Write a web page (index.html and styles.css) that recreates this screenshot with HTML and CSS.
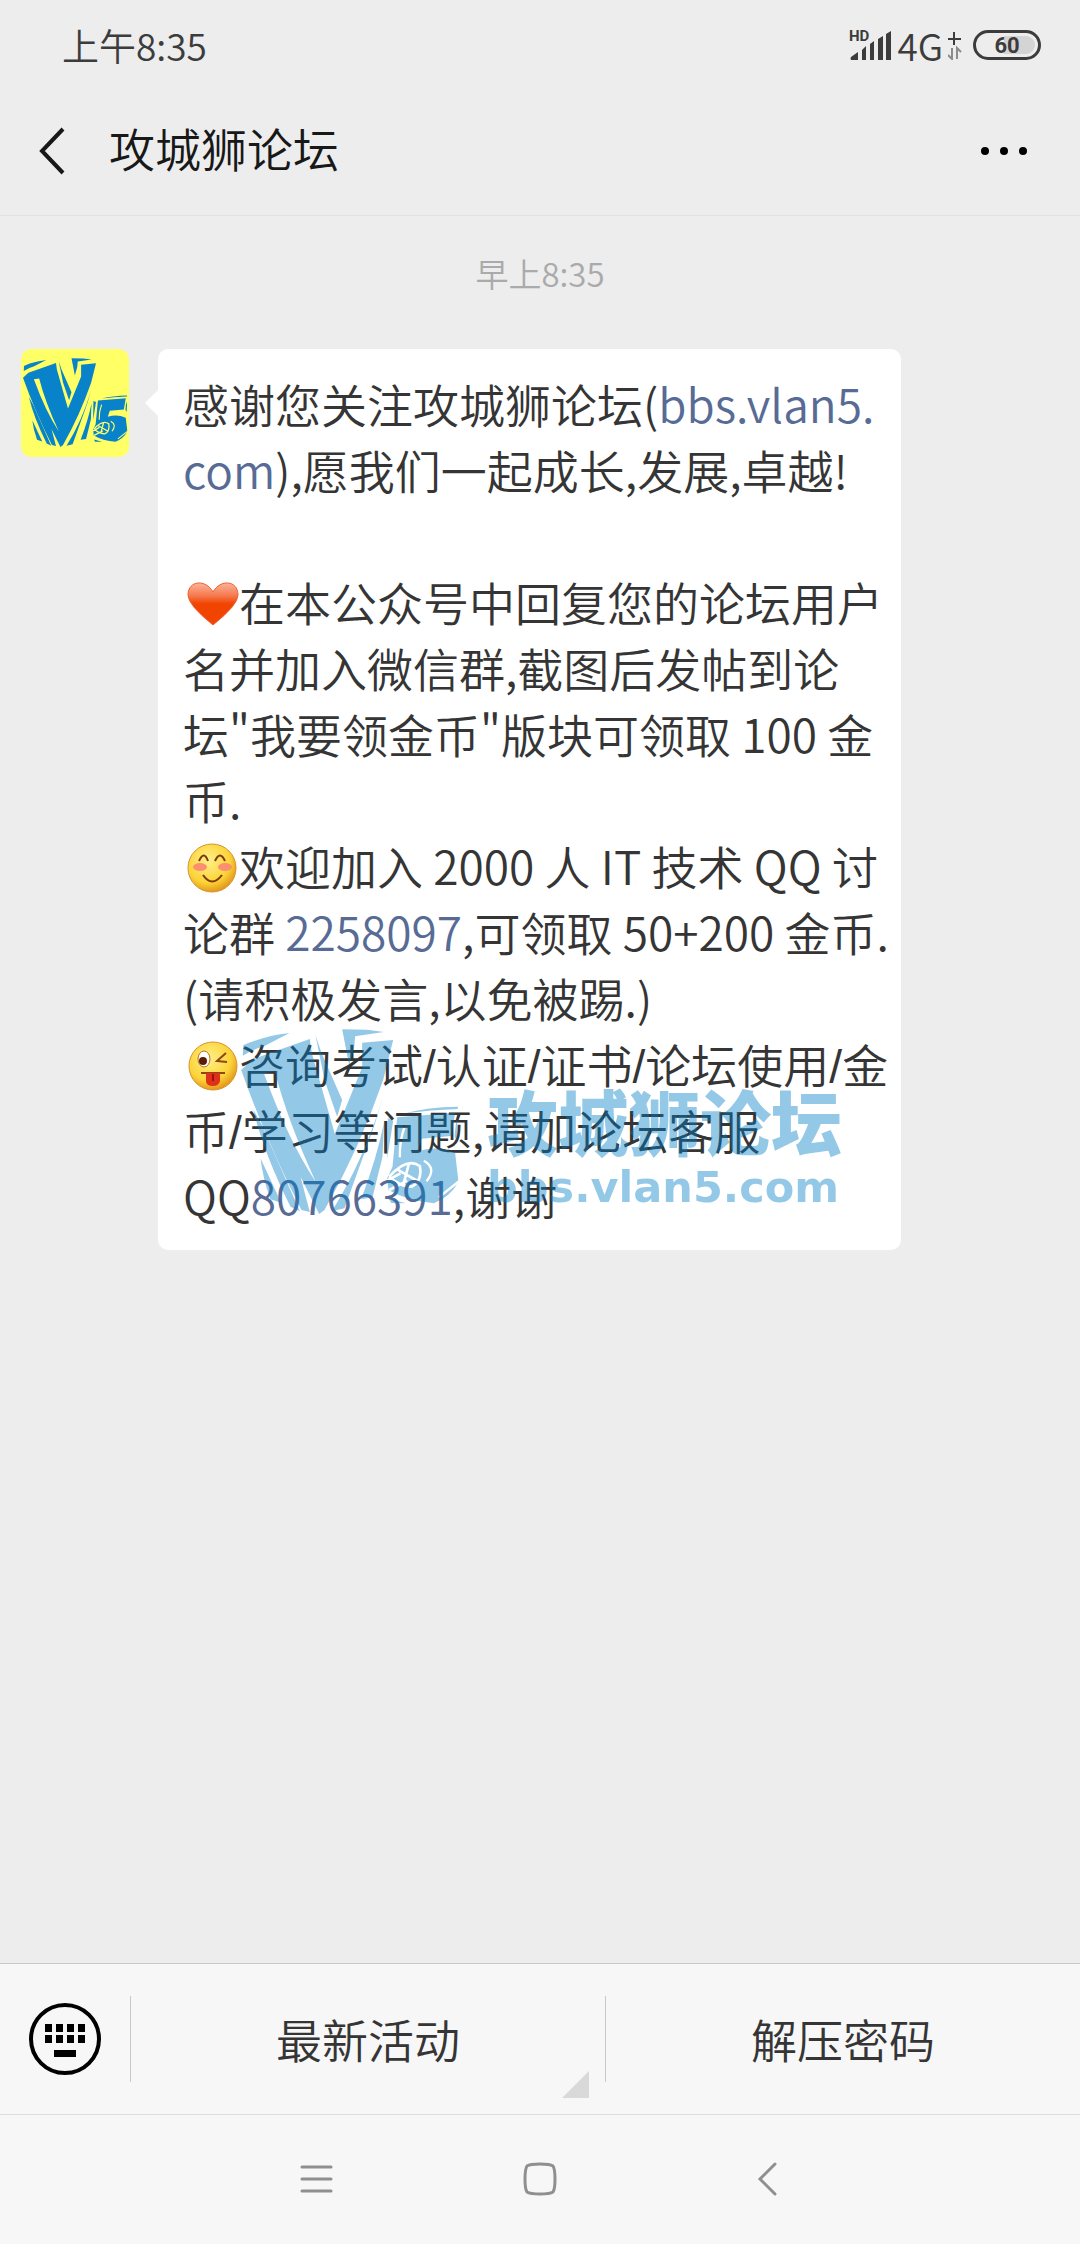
FILE: index.html
```html
<!DOCTYPE html>
<html lang="zh-CN">
<head>
    <meta charset="UTF-8">
    <meta name="viewport" content="width=device-width, initial-scale=1.0">
    <title>攻城狮论坛</title>
    <link rel="stylesheet" href="styles.css">
</head>
<body>
    <!-- V5 logo, shared by the avatar and the watermark -->
    <svg class="defs" width="0" height="0" aria-hidden="true">
        <defs>
            <mask id="cuts" maskUnits="userSpaceOnUse" x="0" y="0" width="800" height="700">
                <rect width="800" height="700" fill="#fff"/>
                <path d="M130 190L163 184Q200 330 286 516Q205 395 130 190Z" fill="#000"/>
                <path d="M553 348Q537 390 538 442" fill="none" stroke="#000" stroke-width="7"/>
                <path d="M506 500Q560 440 598 468Q606 512 574 530Q540 530 506 500M530 478L596 516M566 458L548 526M500 512L540 490M506 540L560 512" fill="none" stroke="#000" stroke-width="8"/>
                <path d="M610 452Q650 474 618 514M655 562L720 510M672 570L720 544" fill="none" stroke="#000" stroke-width="7"/>
            </mask>
        </defs>
        <symbol id="v5" viewBox="62 57 656 555">
            <g mask="url(#cuts)">
                <path d="M67 137L68 106Q130 78 207 69L132 108Q92 120 67 137Z"/>
                <path d="M62 180L96 148L268 87L274 130L343 372L372 302L425 172L425 98L518 90L488 210Q415 420 312 600L296 612L240 500L268 606L243 600Q140 400 62 180Z"/>
                <path d="M285 76L302 126L365 270L350 320L312 210Z"/>
                <path d="M365 58L440 59L490 66L404 79L401 112L386 166Z"/>
                <path d="M98 298L124 345L238 604L210 590Q130 430 98 298Z"/>
                <path d="M120 445L182 578L150 568Q128 510 120 445Z"/>
                <path d="M487 262L462 345L372 595L334 604Q430 450 487 262Z"/>
                <path d="M490 340L486 440L456 562L422 568Q470 440 490 340Z"/>
                <path d="M502 325L518 332L500 446Z"/>
                <path d="M555 310Q620 291 713 290L711 297Q630 300 555 310Z"/>
                <path d="M530 322L704 308L692 378L604 386L592 424Q650 404 704 430L714 516Q690 560 640 580Q560 572 504 540L500 505L516 470Z"/>
                <path d="M708 326L712 350L709 396L702 378Z"/>
                <path d="M506 566L556 580L512 579Z"/>
            </g>
        </symbol>
        <radialGradient id="face" cx="0.42" cy="0.35" r="0.65">
            <stop offset="0" stop-color="#fff08a"/>
            <stop offset="0.7" stop-color="#fcd338"/>
            <stop offset="1" stop-color="#e39a1c"/>
        </radialGradient>
        <linearGradient id="heart" x1="0" y1="0" x2="0" y2="1">
            <stop offset="0" stop-color="#fbb49a"/>
            <stop offset="0.3" stop-color="#f67a50"/>
            <stop offset="0.5" stop-color="#f04400"/>
            <stop offset="1" stop-color="#f04400"/>
        </linearGradient>
    </svg>

    <div class="status">
        <span class="clock">上午8:35</span>
        <div class="indicators">
            <svg width="44" height="38" viewBox="0 -2 44 38" fill="#3c3c3c">
                <text class="hd" x="1" y="13">HD</text>
                <path d="M3 29L10 24V32H3Q2 30 3 29ZM14 22L18 18V32H14ZM22 16L26 13V32H22ZM30 11L35 8V32H30ZM38 6L43 3V32H38Z"/>
            </svg>
            <span class="network">4G</span>
            <svg width="14" height="30" viewBox="0 0 14 30">
                <path d="M0 9H13M6 2V15" stroke="#3c3c3c" stroke-width="2"/>
                <path d="M4 18V29L0 25M9 29V18L13 22" fill="none" stroke="#8c8c8c" stroke-width="2"/>
            </svg>
            <span class="battery">60</span>
        </div>
    </div>

    <header class="header">
        <button class="icon-button" aria-label="返回">
            <svg width="28" height="50" viewBox="0 0 28 50"><path d="M25 3L4 25L25 47" fill="none" stroke="#181818" stroke-width="4"/></svg>
        </button>
        <h1>攻城狮论坛</h1>
        <button class="icon-button" aria-label="更多">
            <svg width="48" height="10" viewBox="0 0 48 10"><circle cx="5" cy="5" r="4"/><circle cx="24" cy="5" r="4"/><circle cx="43" cy="5" r="4"/></svg>
        </button>
    </header>

    <main class="chat">
        <p class="time">早上8:35</p>
        <div class="message">
            <div class="avatar"><svg width="105" height="89"><use href="#v5"/></svg></div>
            <div class="bubble">
                <p>感谢您关注攻城狮论坛(<a href="#">bbs.vlan5.<br>com</a>),愿我们一起成长,发展,卓越!</p>
                <br>
                <p><svg class="emoji" viewBox="0 0 56 50" role="img" aria-label="爱心">
                    <path d="M30 46Q5 26 5 16C5 1 23 0 30 13C37 0 55 1 55 16Q55 26 30 46Z" fill="url(#heart)" stroke="#f06030"/>
                </svg>在本公众号中回复您的论坛用户<br>名并加入微信群,截图后发帖到论<br>坛"我要领金币"版块可领取 100 金<br>币.</p>
                <p><svg class="emoji" viewBox="0 0 56 50" role="img" aria-label="微笑">
                    <circle cx="29" cy="25" r="24" fill="url(#face)" stroke="#d8922a"/>
                    <ellipse cx="17" cy="24" rx="7" ry="4" fill="#fb8f70"/>
                    <ellipse cx="42" cy="24" rx="7" ry="4" fill="#fb8f70"/>
                    <path d="M16 18Q21 7 25 18M32 18Q37 7 42 18M20 32Q29 45 39 32" fill="none" stroke="#7c3808" stroke-width="2"/>
                </svg>欢迎加入 2000 人 IT 技术 QQ 讨<br>论群 <a href="#">2258097</a>,可领取 50+200 金币.<br>(请积极发言,以免被踢.)</p>
                <p><svg class="emoji" viewBox="0 0 56 50" role="img" aria-label="调皮">
                    <circle cx="30" cy="25" r="24" fill="url(#face)" stroke="#d8922a"/>
                    <ellipse cx="21" cy="18" rx="6" ry="8" fill="#fff" stroke="#b87018"/>
                    <circle cx="20" cy="20" r="4" fill="#5a1c08"/>
                    <path d="M43 12L34 20L44 21M18 32H42" fill="none" stroke="#8c4810" stroke-width="2"/>
                    <path d="M23 32H37V40Q36 45 30 45Q23 45 23 40Z" fill="#e0301c"/>
                    <path d="M30 33V40" stroke="#9c1408" stroke-width="2"/>
                </svg>咨询考试<i>/</i>认证<i>/</i>证书<i>/</i>论坛使用<i>/</i>金<br>币<i>/</i>学习等问题,请加论坛客服<br>QQ<a href="#">80766391</a>,谢谢</p>
                <div class="watermark">
                    <svg width="219" height="185"><use href="#v5"/></svg>
                    <div class="watermark-text">
                        <strong>攻城狮论坛</strong>
                        <span>bbs.vlan5.com</span>
                    </div>
                </div>
            </div>
        </div>
    </main>

    <footer>
        <div class="menu">
            <button class="keyboard" aria-label="键盘">
                <svg width="74" height="74" viewBox="0 0 74 74">
                    <circle cx="37" cy="37" r="34" fill="none" stroke="#000" stroke-width="4"/>
                    <path d="M17 22h7v8h-7zM28 22h7v8h-7zM39 22h7v8h-7zM50 22h7v8h-7zM17 33h7v8h-7zM28 33h7v8h-7zM39 33h7v8h-7zM50 33h7v8h-7zM26 48h22v7h-22z"/>
                </svg>
            </button>
            <button class="menu-item has-sub">最新活动</button>
            <button class="menu-item">解压密码</button>
        </div>
        <nav class="navbar">
            <button class="icon-button" aria-label="任务">
                <svg width="34" height="34" viewBox="0 0 34 34"><path d="M3 5H32M3 17H32M3 29H32"/></svg>
            </button>
            <button class="icon-button" aria-label="主页">
                <svg width="34" height="34" viewBox="0 0 34 34"><path d="M17 2Q27 2 30 4Q32 7 32 17Q32 27 30 30Q27 32 17 32Q7 32 4 30Q2 27 2 17Q2 7 4 4Q7 2 17 2Z"/></svg>
            </button>
            <button class="icon-button" aria-label="后退">
                <svg width="34" height="34" viewBox="0 0 34 34"><path d="M28 2L13 17L28 32"/></svg>
            </button>
        </nav>
    </footer>
</body>
</html>
```
FILE: styles.css
```css
* {
    box-sizing: border-box;
}
body {
    margin: 0;
    min-height: 100vh;
    display: flex;
    flex-direction: column;
    background-color: #ededed;
    color: #353535;
    font-family: "Noto Sans CJK SC", sans-serif;
    font-weight: 350;
}
h1, p {
    margin: 0;
    font-weight: inherit;
}
button {
    padding: 0;
    border: none;
    background: none;
    color: inherit;
    font: inherit;
    cursor: pointer;
}
a {
    color: #576b95;
    text-decoration: none;
}
svg {
    display: block;
}
.defs {
    position: absolute;
}

/* status bar */
.status {
    height: 90px;
    padding: 0 39px 0 62px;
    display: flex;
    align-items: center;
    justify-content: space-between;
    color: #3c3c3c;
    font-size: 37px;
}
.indicators {
    display: flex;
    align-items: center;
    gap: 5px;
}
.hd {
    font-family: Roboto, sans-serif;
    font-size: 15px;
    font-weight: 700;
}
.network {
    font-size: 37px;
    line-height: 38px;
}
.battery {
    width: 68px;
    height: 30px;
    margin-left: 6px;
    border: 3px solid #3c3c3c;
    border-radius: 15px;
    background: linear-gradient(to right, #ededed 45%, #d4d4d4 45%) padding-box;
    box-shadow: inset 0 0 0 3px #ededed;
    font-family: Roboto, sans-serif;
    font-size: 22px;
    font-weight: 700;
    line-height: 25px;
    text-align: center;
}

/* title bar */
.header {
    height: 126px;
    padding: 0 52px 4px 38px;
    display: flex;
    align-items: center;
    border-bottom: 1px solid #e2e2e2;
    color: #181818;
}
.header h1 {
    flex: 1;
    margin-left: 43px;
    padding-bottom: 8px;
    font-size: 46px;
    line-height: 66px;
}

/* chat */
.chat {
    flex: 1;
    padding: 33px 21px;
}
.time {
    margin-bottom: 52px;
    color: #aaa;
    font-size: 33px;
    line-height: 48px;
    text-align: center;
}
.message {
    padding-right: 158px;
    display: flex;
    align-items: flex-start;
    gap: 29px;
}
.avatar {
    width: 108px;
    height: 108px;
    padding: 9px 2px;
    border-radius: 10px;
    background-color: #ffff66;
    fill: #0882c8;
}
.bubble {
    position: relative;
    flex: 1;
    padding: 21px 0 22px 25px;
    border-radius: 10px;
    background-color: #fff;
    font-size: 46px;
    line-height: 66px;
    white-space: nowrap;
}
.bubble::before {
    content: "";
    position: absolute;
    left: -13px;
    top: 40px;
    border: 14px solid transparent;
    border-left: none;
    border-right: 14px solid #fff;
}
/* slim slash between the topics */
.bubble i {
    font-family: "Liberation Sans", sans-serif;
    font-style: normal;
    line-height: 1;
}
.emoji {
    display: inline-block;
    width: 56px;
    height: 50px;
    vertical-align: -8px;
}
.watermark {
    position: absolute;
    left: 83px;
    top: 680px;
    display: flex;
    gap: 27px;
    color: #007dc8;
    fill: #007dc8;
    opacity: 0.42;
    pointer-events: none;
}
.watermark-text {
    padding-top: 50px;
    display: flex;
    flex-direction: column;
}
.watermark strong {
    font-size: 71px;
    font-weight: 900;
    line-height: 80px;
}
.watermark span {
    font-family: "DejaVu Sans", sans-serif;
    font-size: 43px;
    font-weight: 700;
    line-height: 56px;
}

/* bottom menu */
.menu {
    height: 151px;
    display: grid;
    grid-template-columns: 130px 1fr 1fr;
    align-items: center;
    border-top: 1px solid #c8c8c8;
    background-color: #f7f7f7;
}
.keyboard {
    display: flex;
    justify-content: center;
}
.menu-item {
    position: relative;
    height: 86px;
    padding-bottom: 2px;
    border-left: 1px solid #c8c8c8;
    font-size: 46px;
}
.has-sub::after {
    content: "";
    position: absolute;
    right: 16px;
    bottom: -16px;
    border-left: 27px solid transparent;
    border-bottom: 27px solid #d9d9d9;
}
.navbar {
    height: 130px;
    padding-bottom: 2px;
    display: flex;
    align-items: center;
    justify-content: center;
    gap: 190px;
    border-top: 1px solid #dcdcdc;
    background-color: #f7f7f7;
}
.navbar svg {
    fill: none;
    stroke: #8f8f8f;
    stroke-width: 3px;
    stroke-linecap: round;
}
```
